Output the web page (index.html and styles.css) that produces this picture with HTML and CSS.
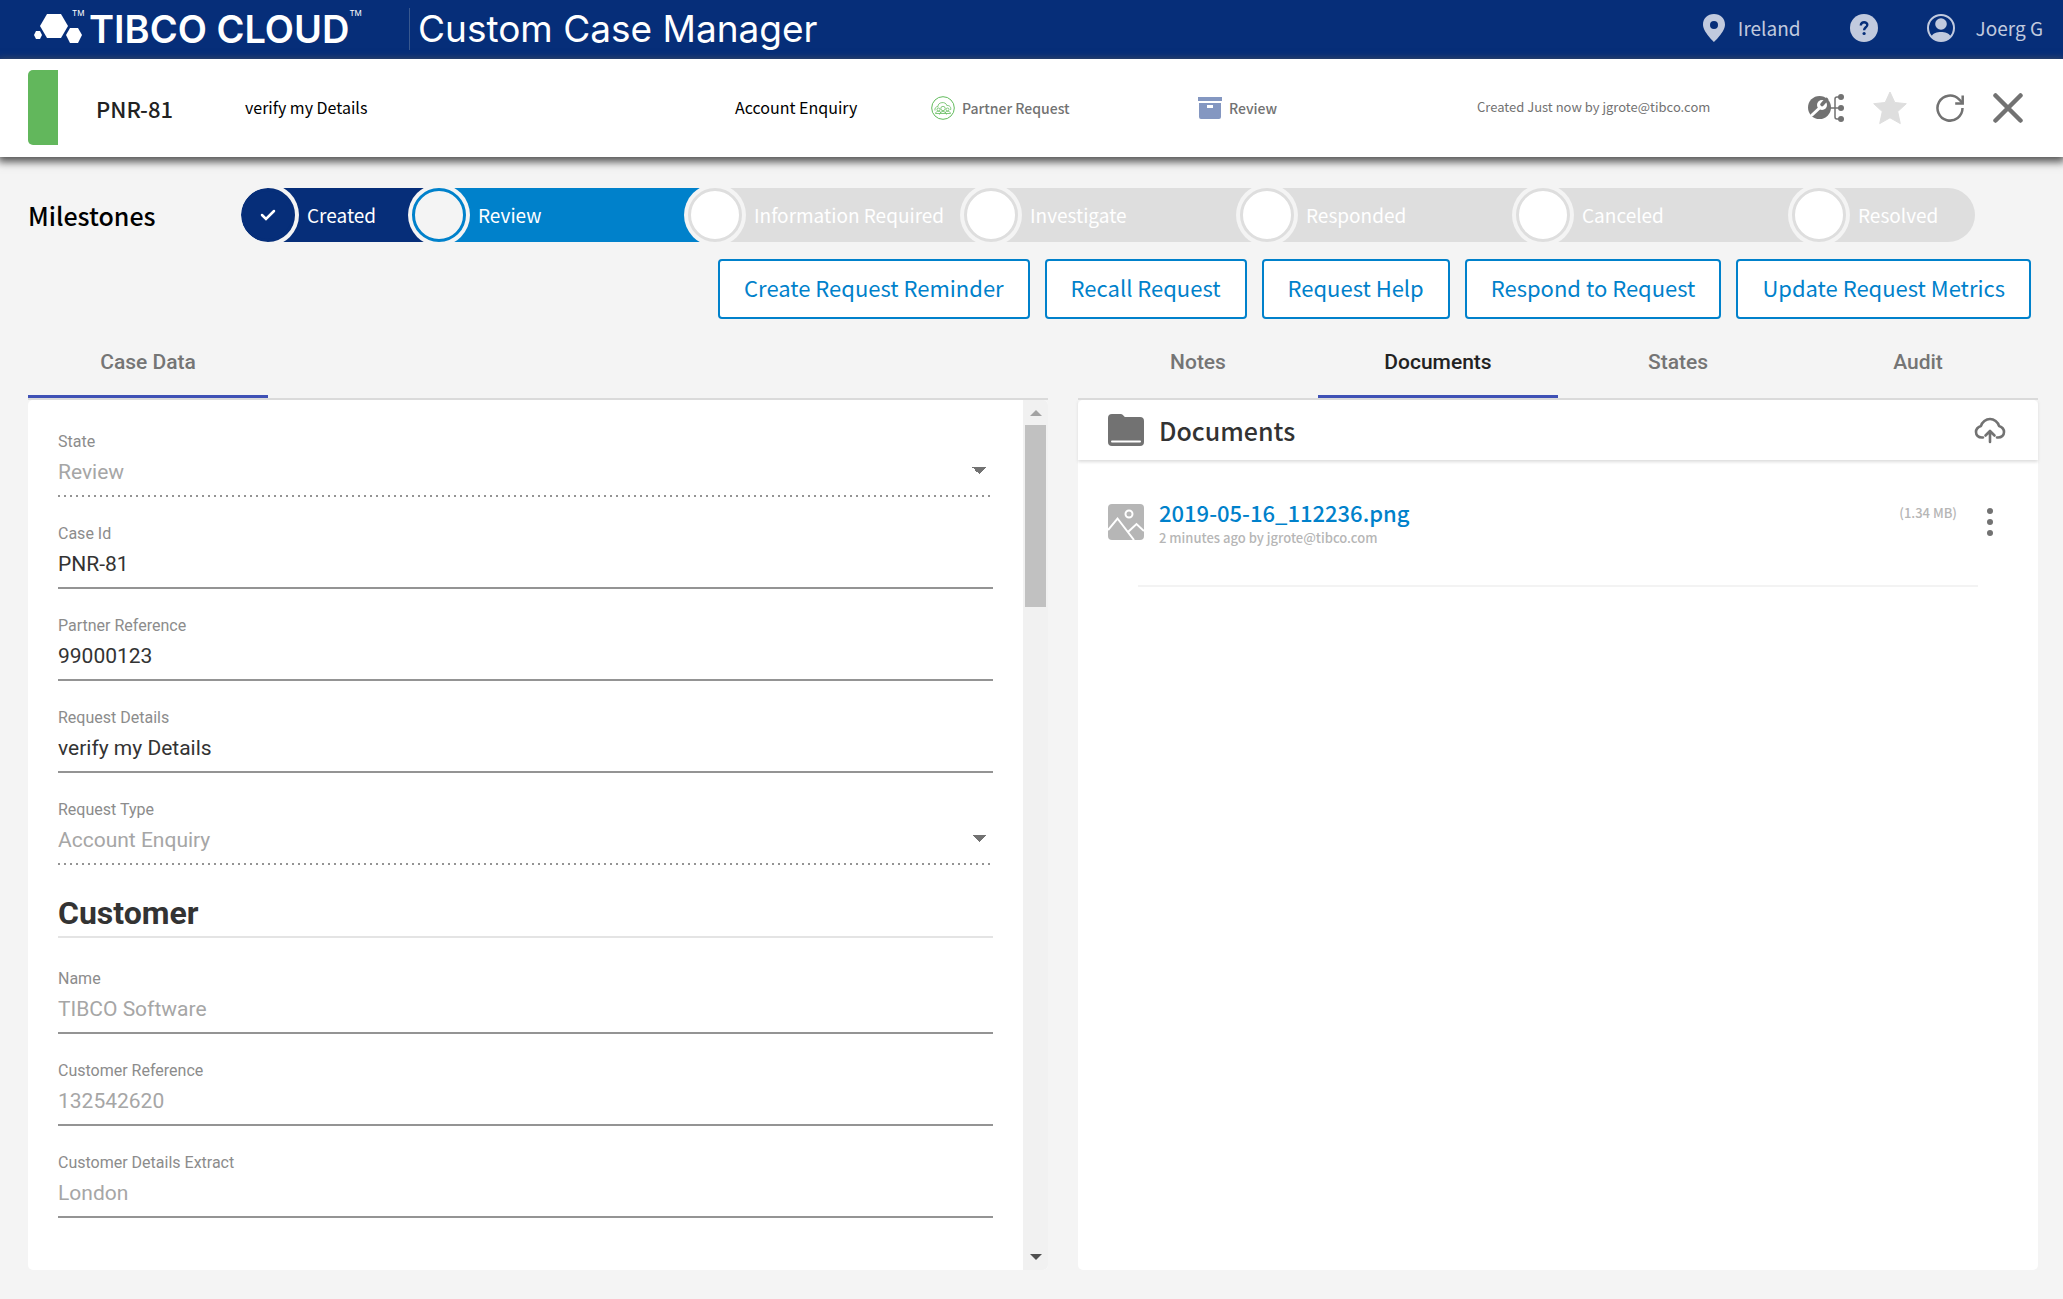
FILE: index.html
```html
<!DOCTYPE html>
<html lang="en">
<head>
<meta charset="utf-8">
<meta name="viewport" content="width=device-width, initial-scale=1">
<title>Custom Case Manager</title>
<link rel="stylesheet" href="styles.css">
</head>
<body>
<header class="topbar">
  <div class="brand">
    <svg class="brand-mark" width="48" height="32" viewBox="0 0 48 32" fill="#fff" aria-hidden="true">
      <path d="M13 1h14l7 12-7 12H13L6 13z"/>
      <path d="M36 15h8l4 7-4 8h-8l-4-8z"/>
      <path d="M2 18h4l2 4-2 4H2l-2-4z"/>
    </svg>
    <sup class="tm">TM</sup>
    <span class="brand-name">TIBCO CLOUD</span>
    <sup class="tm">TM</sup>
  </div>
  <h1 class="app-name">Custom Case Manager</h1>
  <nav class="account">
    <a class="account-link" href="#region">
      <svg width="24" height="28" viewBox="0 0 24 28" fill="currentColor" aria-hidden="true"><path fill-rule="evenodd" d="M12 0C5.500 0 1 4.500 1 10.500 1 18 12 28 12 28s11-10 11-17.500C23 4.500 18.500 0 12 0zm0 7a4 4 0 1 1 0 8 4 4 0 0 1 0-8z"/></svg>
      <span>Ireland</span>
    </a>
    <a class="account-link" href="#help" aria-label="Help">
      <svg width="28" height="28" viewBox="0 0 28 28" aria-hidden="true"><circle cx="14" cy="14" r="14" fill="currentColor"/><path d="M10.800 11.500c0-4.500 6.700-4 6.500-.5-.2 2.200-3.200 2.500-3.200 5.200" fill="none" stroke="#062e79" stroke-width="2.400"/><circle cx="14.100" cy="19.500" r="1.600" fill="#062e79"/></svg>
    </a>
    <a class="account-link user" href="#profile">
      <svg width="28" height="28" viewBox="0 0 28 28" aria-hidden="true"><circle cx="14" cy="14" r="13" fill="none" stroke="currentColor" stroke-width="2"/><circle cx="14" cy="10" r="5.800" fill="currentColor"/><path d="M4.500 22c3-5.500 16-5.500 19 0-4 6.500-15 6.500-19 0z" fill="currentColor"/></svg>
      <span>Joerg G</span>
    </a>
  </nav>
</header>

<section class="casebar" aria-label="Case summary">
  <span class="flag"></span>
  <strong class="case-id">PNR-81</strong>
  <span class="case-text">verify my Details</span>
  <span class="case-text">Account Enquiry</span>
  <span class="case-meta">
    <svg width="24" height="24" viewBox="0 0 24 24" fill="none" stroke="#62bb5c" aria-hidden="true"><circle cx="12" cy="12" r="11.300"/><g stroke-width=".8"><path d="M7 10.500C6.500 6 15 5 15.800 9.500c3-.3 4.700 2 3.700 4.500M7 10.500c-2.500.2-3.500 2-3 4"/><circle cx="12" cy="12.500" r="2.200"/><circle cx="7.500" cy="13.500" r="1.500"/><circle cx="16.500" cy="13.500" r="1.500"/><path d="M4.500 17.500c.5-3 5-3 5.500-.5M14 17c.5-2.500 5-2.500 5.500.5M8.500 18.500c.5-4 6.500-4 7 0M4.500 17.500h15"/></g></svg>
    Partner Request
  </span>
  <span class="case-meta">
    <svg width="24" height="22" viewBox="0 0 24 22" fill="#8497c1" aria-hidden="true"><path d="M0 0h24v4H0z"/><path fill-rule="evenodd" d="M1 6h22v14a2 2 0 0 1-2 2H3a2 2 0 0 1-2-2zm8 2v3h6V8z"/></svg>
    Review
  </span>
  <span class="case-created">Created Just now by jgrote@tibco.com</span>
  <div class="case-tools">
    <button type="button" aria-label="Case tools"><svg width="36" height="28" viewBox="0 0 36 28" aria-hidden="true"><circle cx="11.500" cy="13.500" r="11.500" fill="#727272"/><path d="M4 21l7-6.500" stroke="#fff" stroke-width="3" stroke-linecap="round"/><circle cx="14" cy="11" r="5" fill="#fff"/><path d="M14 10.500l4.500-5" stroke="#727272" stroke-width="3.600" stroke-linecap="round"/><path d="M22 14h11M33 3h-4a2 2 0 0 0-2 2v18a2 2 0 0 0 2 2h4" fill="none" stroke="#727272" stroke-width="1.500"/><g fill="#727272"><circle cx="33" cy="3" r="3"/><circle cx="33" cy="14" r="3"/><circle cx="33" cy="25" r="3"/></g></svg></button>
    <button type="button" aria-label="Favourite"><svg width="34" height="34" viewBox="0 0 34 34" fill="#dedede" stroke="#dedede" stroke-linejoin="round" aria-hidden="true"><path d="M17 1l4.800 10.500 11.500 1.200-8.600 7.900 2.600 12L17 26.800 6.700 32.600l2.600-12L.7 12.700l11.500-1.200z"/></svg></button>
    <button type="button" aria-label="Refresh"><svg width="28" height="28" viewBox="0 0 28 28" fill="none" stroke="#727272" stroke-width="2.500" aria-hidden="true"><path d="M26.500 14A12.500 12.500 0 1 1 22.800 5.200l3.500 3.500"/><path d="M26.700 1.500v8h-7.500"/></svg></button>
    <button type="button" aria-label="Close"><svg width="30" height="30" viewBox="0 0 30 30" stroke="#727272" stroke-width="4.500" stroke-linecap="round" aria-hidden="true"><path d="M2.500 2.500l25 25M27.500 2.500l-25 25"/></svg></button>
  </div>
</section>

<main class="page">
  <section class="milestones">
    <h2 class="milestones-title">Milestones</h2>
    <ol class="track">
      <li class="step done"><span class="dot"><svg width="16" height="12" viewBox="0 0 16 12" fill="none" stroke="#fff" stroke-width="2.500" stroke-linecap="round" aria-hidden="true"><path d="M2 6l4 4 8-8"/></svg></span>Created</li>
      <li class="step current"><span class="dot"></span>Review</li>
      <li class="step"><span class="dot"></span>Information Required</li>
      <li class="step"><span class="dot"></span>Investigate</li>
      <li class="step"><span class="dot"></span>Responded</li>
      <li class="step"><span class="dot"></span>Canceled</li>
      <li class="step"><span class="dot"></span>Resolved</li>
    </ol>
  </section>

  <div class="actions">
    <button type="button">Create Request Reminder</button>
    <button type="button">Recall Request</button>
    <button type="button">Request Help</button>
    <button type="button">Respond to Request</button>
    <button type="button">Update Request Metrics</button>
  </div>

  <div class="columns">
    <section class="column">
      <div class="tabs" role="tablist">
        <button class="tab underlined" type="button" role="tab">Case Data</button>
      </div>
      <div class="panel data-panel">
        <form class="case-form">
          <div class="field"><label for="state">State</label><select id="state" disabled><option>Review</option></select></div>
          <div class="field"><label for="caseid">Case Id</label><input id="caseid" type="text" value="PNR-81"></div>
          <div class="field"><label for="partner">Partner Reference</label><input id="partner" type="text" value="99000123"></div>
          <div class="field"><label for="details">Request Details</label><input id="details" type="text" value="verify my Details"></div>
          <div class="field"><label for="type">Request Type</label><select id="type" disabled><option>Account Enquiry</option></select></div>
          <h3 class="group-title">Customer</h3>
          <div class="field"><label for="name">Name</label><input id="name" type="text" value="TIBCO Software" disabled></div>
          <div class="field"><label for="custref">Customer Reference</label><input id="custref" type="text" value="132542620" disabled></div>
          <div class="field"><label for="extract">Customer Details Extract</label><input id="extract" type="text" value="London" disabled></div>
        </form>
        <div class="scrollbar" aria-hidden="true">
          <svg width="12" height="6" viewBox="0 0 12 6" fill="#a3a3a3"><path d="M6 0l6 6H0z"/></svg>
          <span class="thumb"></span>
          <svg class="down" width="12" height="6" viewBox="0 0 12 6" fill="#505050"><path d="M0 0h12L6 6z"/></svg>
        </div>
      </div>
    </section>

    <section class="column">
      <div class="tabs" role="tablist">
        <button class="tab" type="button" role="tab">Notes</button>
        <button class="tab underlined active" type="button" role="tab" aria-selected="true">Documents</button>
        <button class="tab" type="button" role="tab">States</button>
        <button class="tab" type="button" role="tab">Audit</button>
      </div>
      <div class="panel docs-panel">
        <header class="docs-head">
          <svg width="36" height="32" viewBox="0 0 36 32" aria-hidden="true"><path d="M4 0h9c2 0 3 3 4 3h15a4 4 0 0 1 4 4v21a4 4 0 0 1-4 4H4a4 4 0 0 1-4-4V4a4 4 0 0 1 4-4z" fill="#727272"/><path d="M4 27.500h28" stroke="#fff" stroke-width="2" stroke-linecap="round"/></svg>
          <h2>Documents</h2>
          <button type="button" aria-label="Upload"><svg width="32" height="27" viewBox="0 0 32 27" fill="none" stroke="#727272" stroke-width="2.600" stroke-linecap="round" stroke-linejoin="round" aria-hidden="true"><path d="M9 20.500C4 21 2 18 2 15c0-3 2-5 5-6 1-4 5-7 9-7s8 3 9 7c3 1 5 3 5 6 0 3-2 6-7 5.500"/><path d="M16 25V14M11.500 18.500L16 14l4.500 4.500"/></svg></button>
        </header>
        <article class="doc">
          <svg width="36" height="36" viewBox="0 0 36 36" aria-hidden="true"><rect width="36" height="36" rx="4" fill="#b6b6b6"/><g fill="none" stroke="#fff" stroke-width="2"><circle cx="21" cy="10" r="3.500"/><path d="M0 26l9.500-11.500L26 36M20.500 27.500l8-7.500L36 27"/></g></svg>
          <div class="doc-text">
            <a href="#file">2019-05-16_112236.png</a>
            <small>2 minutes ago by jgrote@tibco.com</small>
          </div>
          <small class="doc-size">(1.34 MB)</small>
          <button type="button" aria-label="More"><svg width="6" height="28" viewBox="0 0 6 28" fill="#727272" aria-hidden="true"><circle cx="3" cy="3" r="3"/><circle cx="3" cy="14" r="3"/><circle cx="3" cy="25" r="3"/></svg></button>
        </article>
        <hr class="rule">
      </div>
    </section>
  </div>
</main>
</body>
</html>
```
FILE: styles.css
```css
* { box-sizing: border-box; }

body {
  margin: 0;
  min-height: 100vh;
  display: flex;
  flex-direction: column;
  background: #f4f4f4;
  color: #000;
  font-family: "Noto Sans CJK SC", "Noto Sans", sans-serif;
  font-size: 16px;
  line-height: 24px;
}

h1, h2, h3, ol { margin: 0; padding: 0; }
h1, h2, h3 { font-weight: 500; }
svg { display: block; flex: none; }
a { text-decoration: none; }

button {
  margin: 0;
  padding: 0;
  border: 0;
  background: none;
  font: inherit;
  color: inherit;
  cursor: pointer;
}

/* Top bar */
.topbar {
  display: flex;
  align-items: center;
  height: 59px;
  padding: 0 20px 2px 34px;
  background: #062e79;
  color: #fff;
  font-family: Inter, sans-serif;
}
.brand { display: flex; align-items: center; width: 375px; }
.tm { align-self: flex-start; font-size: 8px; line-height: 8px; }
.brand-mark + .tm { width: 9px; margin-left: -10px; }
.brand-name { margin-left: 8px; font-size: 38px; line-height: 40px; font-weight: 600; }
.app-name {
  padding-left: 8px;
  border-left: 1px solid #38588f;
  font-size: 37px;
  line-height: 42px;
  font-weight: 400;
}
.account {
  display: flex;
  align-items: center;
  gap: 49px;
  margin-left: auto;
  padding-bottom: 2px;
  font-family: "Noto Sans CJK SC", sans-serif;
  font-size: 19px;
}
.account-link { display: flex; align-items: center; gap: 12px; color: #c1cade; }
.account-link.user { gap: 21px; }

/* Case summary bar */
.casebar {
  display: grid;
  grid-template-columns: 68px 149px 490px 196px 267px 279px 1fr auto;
  align-items: center;
  height: 98px;
  padding: 0 40px 0 28px;
  background: #fff;
  box-shadow: 0 3px 8px 2px #555;
  z-index: 1;
}
.flag { width: 30px; height: 75px; margin-bottom: 2px; border-radius: 5px 0 0 5px; background: #62b75c; }
.case-id { font-size: 22px; font-weight: 500; color: #222; }
.case-text { padding-bottom: 2px; }
.case-meta { display: flex; align-items: center; gap: 7px; padding-bottom: 1px; font-size: 14px; font-weight: 500; color: #727272; }
.case-created { padding-bottom: 2px; font-size: 13px; color: #727272; }
.case-tools { display: flex; align-items: center; gap: 29px; }

/* Main page */
.page {
  flex: 1;
  display: flex;
  flex-direction: column;
  padding: 31px 25px 29px 28px;
}
.milestones {
  display: grid;
  grid-template-columns: 213px 1fr;
  align-items: center;
  padding-right: 63px;
}
.milestones-title { font-size: 25px; }
.track {
  display: grid;
  grid-template-columns: 171fr 276fr 276fr 276fr 276fr 276fr 183fr;
  height: 54px;
  overflow: hidden;
  border-radius: 27px;
  list-style: none;
}
/* Each step's bar runs under the dot of the next one */
.step {
  --bar: #dedede;
  display: flex;
  align-items: center;
  gap: 12px;
  margin-right: -27px;
  white-space: nowrap;
  font-size: 19px;
  color: #fff;
  background: linear-gradient(to right, transparent 27px, var(--bar) 27px);
}
.step:last-child { margin-right: 0; }
.step.done { --bar: #062e79; }
.step.current { --bar: #0081cb; }
.dot {
  flex: none;
  display: grid;
  place-items: center;
  width: 54px;
  height: 54px;
  border: 3px solid var(--bar);
  border-radius: 50%;
  background: #fff;
  box-shadow: 0 0 0 4px #f4f4f4;
}
.done .dot { background: #062e79; }
.current .dot { background: #f4f4f4; }

.actions { display: flex; justify-content: flex-end; gap: 15px; padding: 17px 7px 0 0; }
.actions button {
  height: 60px;
  padding: 0 24px 4px;
  border: 2px solid #0081cb;
  border-radius: 4px;
  background: #fff;
  color: #0081cb;
  font-size: 22px;
}

/* Two columns */
.columns {
  flex: 1;
  display: grid;
  grid-template-columns: 1020fr 960fr;
  gap: 30px;
}
.column { display: flex; flex-direction: column; font-family: Roboto, sans-serif; }
.tabs { display: flex; height: 81px; border-bottom: 2px solid #dadada; }
.tab {
  width: 240px;
  padding: 10px 0 0;
  border-bottom: 3px solid transparent;
  font-size: 21px;
  font-weight: 500;
  color: #757575;
}
.tab.underlined { border-bottom-color: #3f51b5; }
.tab.active { color: #222; }
.panel { flex: 1; border-radius: 5px; background: #fff; }

.data-panel { display: flex; overflow: hidden; }
.case-form { flex: 1; padding: 5px 30px 0; }
.field { display: flex; flex-direction: column; height: 92px; padding-top: 27px; }
.field label { font-size: 16px; line-height: 20px; color: #8c8c8c; }
.field input, .field select {
  appearance: none;
  flex: 1;
  width: 100%;
  padding: 0 0 3px;
  border: 0;
  border-bottom: 2px solid #949494;
  border-radius: 0;
  background: none;
  font: 21px/24px Roboto, sans-serif;
  color: #333;
  opacity: 1;
}
.field input:disabled { color: #a6a6a6; }
.field select:disabled {
  border: 0;
  padding-bottom: 5px;
  color: #a6a6a6;
  background:
    linear-gradient(to bottom right, #727272 50%, transparent 50%) right 6px top 15px / 8px 7px no-repeat,
    linear-gradient(to bottom left, #727272 50%, transparent 50%) right 14px top 15px / 7px 7px no-repeat,
    repeating-linear-gradient(to right, #949494 0 2px, transparent 2px 6px) left bottom / 100% 2px no-repeat;
}
.group-title {
  margin: 30px 0 4px;
  padding-bottom: 5px;
  border-bottom: 2px solid #e4e4e4;
  font-size: 32px;
  line-height: 36px;
  font-weight: 700;
  color: #333;
}

.scrollbar {
  display: flex;
  flex-direction: column;
  align-items: center;
  width: 25px;
  padding: 10px 0;
  background: #f1f1f1;
}
.thumb { width: 21px; height: 182px; margin-top: 9px; background: #c1c1c1; }
.down { margin-top: auto; }

.docs-panel { font-family: "Noto Sans CJK SC", sans-serif; }
.docs-head {
  display: flex;
  align-items: center;
  gap: 15px;
  height: 60px;
  padding: 0 32px 0 30px;
  box-shadow: 0 2px 3px #ddd;
}
.docs-head h2 { flex: 1; padding-bottom: 1px; font-size: 25px; color: #333; }
.doc { display: flex; align-items: flex-start; gap: 15px; padding: 44px 45px 0 30px; }
.doc-text { flex: 1; display: flex; flex-direction: column; margin-top: -8px; }
.doc-text a { font-size: 22px; line-height: 32px; font-weight: 500; color: #0081cb; }
.doc small { font-size: 13px; line-height: 20px; font-weight: 500; color: #b6b6b6; }
.doc .doc-size { margin: -1px 15px 0 0; }
.doc button { margin-top: 4px; }
.rule { margin: 37px 60px 0; border: 0; border-top: 2px solid #f3f3f3; }
```
